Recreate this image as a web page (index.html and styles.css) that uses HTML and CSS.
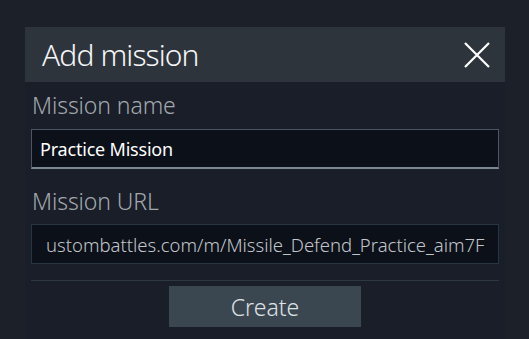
FILE: index.html
```html
<!DOCTYPE html>
<html>
<head>
<meta charset="utf-8">
<link rel="stylesheet" href="styles.css">
</head>
<body>
<div class="dialog">
  <div class="header">
    <span class="title">Add mission</span>
    <svg class="close" width="26" height="26" viewBox="0 0 26 26"><path d="M1 1 L25 25 M25 1 L1 25" stroke="#fff" stroke-width="2.2" fill="none"/></svg>
  </div>
  <div class="body">
    <div class="label">Mission name</div>
    <div class="input name">Practice Mission</div>
    <div class="label">Mission URL</div>
    <div class="input url"><span>ustombattles.com/m/Missile_Defend_Practice_aim7F</span></div>
    <div class="sep"></div>
    <div class="actions"><button class="btn">Create</button></div>
  </div>
</div>
</body>
</html>
```
FILE: styles.css
```css
html, body { margin: 0; height: 100%; }
body {
  background: #1c2029;
  font-family: "Noto Sans", sans-serif;
  font-weight: 300;
  padding: 27px 24px 0 25px;
  box-sizing: border-box;
  overflow: hidden;
}
.dialog {
  width: 480px;
  height: 312px;
  background: #191e28;
}
.header {
  height: 55px;
  background: #2e343c;
  display: flex;
  align-items: center;
  justify-content: space-between;
  padding: 0 15px 0 17px;
}
.title {
  color: #f4f6f7;
  font-size: 30px;
  letter-spacing: -0.9px;
}
.close { display: block; }
.body { padding: 9px 6px 0 6px; }
.label {
  color: #a3a8ae;
  font-size: 23px;
  line-height: 28px;
  padding-left: 1px;
  letter-spacing: -0.1px;
}
.input {
  box-sizing: border-box;
  height: 40px;
  background: #0b1019;
  display: flex;
  align-items: center;
  white-space: nowrap;
  overflow: hidden;
}
.input.name {
  margin: 10px 0 18px;
  border: 1px solid #4b5661;
  border-bottom: 2px solid #7b8893;
  color: #ffffff;
  font-weight: 400;
  font-size: 18px;
  letter-spacing: -0.2px;
  padding-left: 8px;
}
.input.url {
  margin-top: 9px;
  border: 1px solid #263641;
  color: #c2c6ca;
  font-size: 18.5px;
  padding-left: 14px;
}
.sep {
  height: 1px;
  background: #2d3843;
  margin-top: 16px;
}
.actions {
  display: flex;
  padding: 5px 0 0 138px;
}
.btn {
  width: 192px;
  height: 41px;
  border: 0;
  background: #3b4750;
  color: #dfe2e4;
  font-family: inherit;
  font-weight: 300;
  font-size: 23px;
  padding: 0;
}
```
